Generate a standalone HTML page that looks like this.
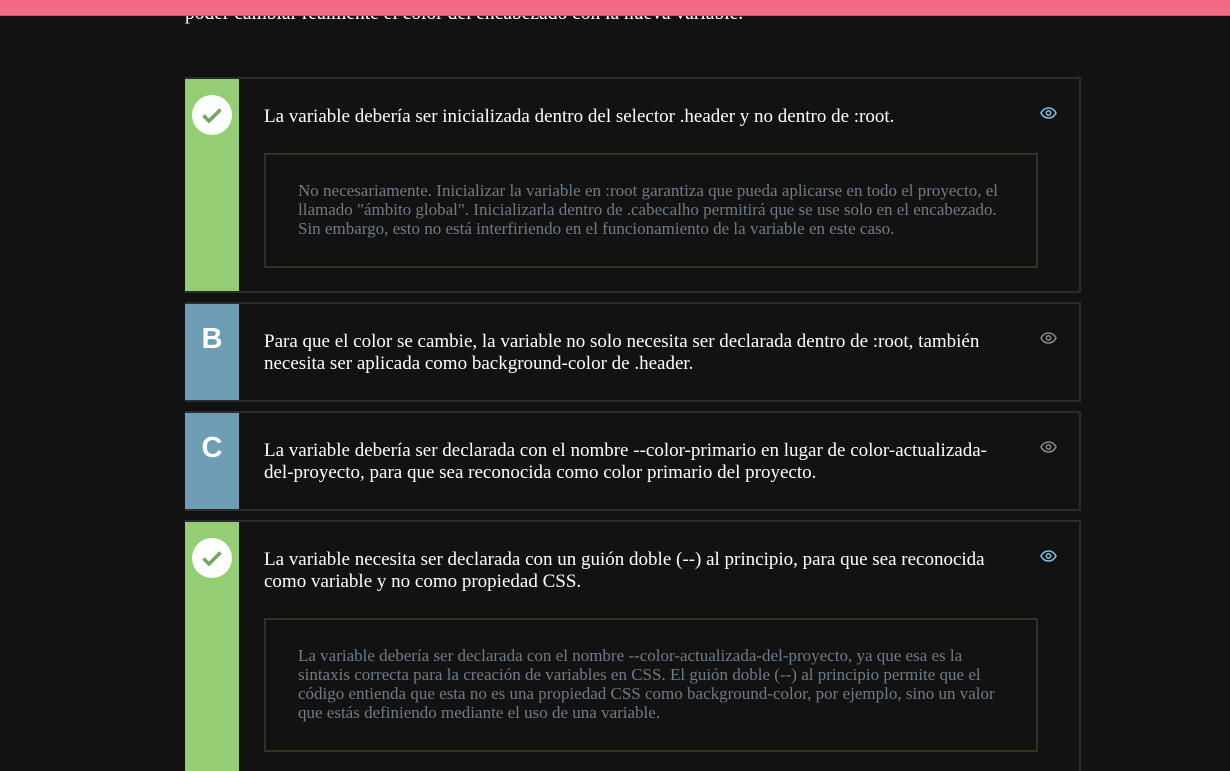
<!DOCTYPE html>
<html><head><meta charset="utf-8"><style>
html,body{margin:0;width:1230px;height:771px;overflow:hidden;}
body{background:#121212;position:relative;font-family:"Liberation Serif",serif;}
.top{position:absolute;left:0;top:0;width:1230px;height:15px;background:#f06a88;border-bottom:1px solid #c4566e;z-index:2;}
.intro{position:absolute;left:185px;top:3px;color:#fff;font-size:19.5px;line-height:22px;white-space:nowrap;}
.card{position:absolute;left:185px;width:894px;border:2px solid #2c2c2c;border-left:none;background:#121212;}
.band{position:absolute;left:0;top:0;bottom:0;width:54px;}
.g{background:#94cd74}.b{background:#6e9db5}
.letter{position:absolute;left:0;width:54px;top:19px;text-align:center;color:#fff;font:bold 29px "Liberation Sans",sans-serif;}
.chk{position:absolute;left:7px;top:16px;width:40px;height:40px;border-radius:50%;background:#fff;}
.q{position:absolute;left:79px;width:730px;color:#fff;font-size:19px;line-height:22px;}
.eye{position:absolute;left:855px;}
.ans{position:absolute;left:79px;width:774px;border:2px solid #2a3522;box-sizing:border-box;color:#6f7b87;font-size:17px;line-height:19px;padding:0 26px 0 32px;}
</style></head><body>
<div class="top"></div>
<div class="intro">poder cambiar realmente el color del encabezado con la nueva variable.</div>

<div class="card" style="top:77px;height:212px">
<div class="band g"></div>
<div class="chk"><svg width="40" height="40"><path d="M11.5 20.5l5.5 5.5 11.5-11.5" fill="none" stroke="#72a463" stroke-width="3.5"/></svg></div>
<div class="q" style="top:27px">La variable debería ser inicializada dentro del selector .header y no dentro de :root.</div>
<svg class="eye" style="top:27px" width="17" height="14" viewBox="0 0 17 14"><path d="M1 7C3 3 6 2 8.5 2S14 3 16 7C14 11 11 12 8.5 12S3 11 1 7Z" fill="none" stroke="#7fc0e6" stroke-width="1.5"/><circle cx="8.5" cy="7" r="2.2" fill="none" stroke="#7fc0e6" stroke-width="1.5"/></svg>
<div class="ans" style="top:74px;height:115px;padding-top:26px">No necesariamente. Inicializar la variable en :root garantiza que pueda aplicarse en todo el proyecto, el llamado "ámbito global". Inicializarla dentro de .cabecalho permitirá que se use solo en el encabezado. Sin embargo, esto no está interfiriendo en el funcionamiento de la variable en este caso.</div>
</div>

<div class="card" style="top:302px;height:96px">
<div class="band b"></div><div class="letter">B</div>
<div class="q" style="top:27px">Para que el color se cambie, la variable no solo necesita ser declarada dentro de :root, también necesita ser aplicada como background-color de .header.</div>
<svg class="eye" style="top:27px" width="17" height="14" viewBox="0 0 17 14"><path d="M1 7C3 3 6 2 8.5 2S14 3 16 7C14 11 11 12 8.5 12S3 11 1 7Z" fill="none" stroke="#8a8a8a" stroke-width="1.5"/><circle cx="8.5" cy="7" r="2.2" fill="none" stroke="#8a8a8a" stroke-width="1.5"/></svg>
</div>

<div class="card" style="top:411px;height:96px">
<div class="band b"></div><div class="letter">C</div>
<div class="q" style="top:27px">La variable debería ser declarada con el nombre --color-primario en lugar de color-actualizada-del-proyecto, para que sea reconocida como color primario del proyecto.</div>
<svg class="eye" style="top:27px" width="17" height="14" viewBox="0 0 17 14"><path d="M1 7C3 3 6 2 8.5 2S14 3 16 7C14 11 11 12 8.5 12S3 11 1 7Z" fill="none" stroke="#8a8a8a" stroke-width="1.5"/><circle cx="8.5" cy="7" r="2.2" fill="none" stroke="#8a8a8a" stroke-width="1.5"/></svg>
</div>

<div class="card" style="top:520px;height:270px">
<div class="band g"></div>
<div class="chk"><svg width="40" height="40"><path d="M11.5 20.5l5.5 5.5 11.5-11.5" fill="none" stroke="#72a463" stroke-width="3.5"/></svg></div>
<div class="q" style="top:27px">La variable necesita ser declarada con un guión doble (--) al principio, para que sea reconocida como variable y no como propiedad CSS.</div>
<svg class="eye" style="top:27px" width="17" height="14" viewBox="0 0 17 14"><path d="M1 7C3 3 6 2 8.5 2S14 3 16 7C14 11 11 12 8.5 12S3 11 1 7Z" fill="none" stroke="#7fc0e6" stroke-width="1.5"/><circle cx="8.5" cy="7" r="2.2" fill="none" stroke="#7fc0e6" stroke-width="1.5"/></svg>
<div class="ans" style="top:96px;height:134px;padding-top:26px">La variable debería ser declarada con el nombre --color-actualizada-del-proyecto, ya que esa es la sintaxis correcta para la creación de variables en CSS. El guión doble (--) al principio permite que el código entienda que esta no es una propiedad CSS como background-color, por ejemplo, sino un valor que estás definiendo mediante el uso de una variable.</div>
</div>
</body></html>
